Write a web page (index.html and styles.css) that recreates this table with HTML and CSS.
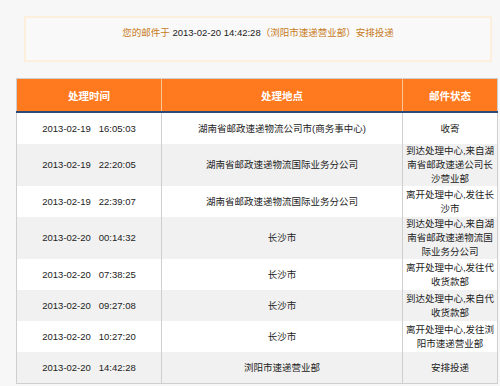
FILE: index.html
```html
<!DOCTYPE html>
<html lang="zh-CN">
<head>
<meta charset="utf-8">
<link rel="stylesheet" href="styles.css">
</head>
<body>
<div class="page">
  <div class="notice">
    <span class="hl">您的邮件于</span> <span class="dt">2013-02-20 14:42:28</span><span class="hl">（浏阳市速递营业部）安排投递</span>
  </div>
  <table class="track">
    <colgroup>
      <col class="c-time"><col class="c-place"><col class="c-state">
    </colgroup>
    <thead>
      <tr><th>处理时间</th><th>处理地点</th><th>邮件状态</th></tr>
    </thead>
    <tbody>
      <tr><td class="t">2013-02-19&nbsp;&nbsp; 16:05:03</td><td>湖南省邮政速递物流公司市(商务事中心)</td><td>收寄</td></tr>
      <tr><td class="t">2013-02-19&nbsp;&nbsp; 22:20:05</td><td>湖南省邮政速递物流国际业务分公司</td><td>到达处理中心,来自湖<br>南省邮政速递公司长<br>沙营业部</td></tr>
      <tr><td class="t">2013-02-19&nbsp;&nbsp; 22:39:07</td><td>湖南省邮政速递物流国际业务分公司</td><td>离开处理中心,发往长<br>沙市</td></tr>
      <tr><td class="t">2013-02-20&nbsp;&nbsp; 00:14:32</td><td>长沙市</td><td>到达处理中心,来自湖<br>南省邮政速递物流国<br>际业务分公司</td></tr>
      <tr><td class="t">2013-02-20&nbsp;&nbsp; 07:38:25</td><td>长沙市</td><td>离开处理中心,发往代<br>收货款部</td></tr>
      <tr><td class="t">2013-02-20&nbsp;&nbsp; 09:27:08</td><td>长沙市</td><td>到达处理中心,来自代<br>收货款部</td></tr>
      <tr><td class="t">2013-02-20&nbsp;&nbsp; 10:27:20</td><td>长沙市</td><td>离开处理中心,发往浏<br>阳市速递营业部</td></tr>
      <tr><td class="t">2013-02-20&nbsp;&nbsp; 14:42:28</td><td>浏阳市速递营业部</td><td>安排投递</td></tr>
    </tbody>
  </table>
</div>
</body>
</html>
```
FILE: styles.css
```css
html, body {
  margin: 0;
  padding: 0;
  background: #f7f7f7;
}
.page {
  padding: 16px 3px 0 16px;
  font-family: "Liberation Sans", "Noto Sans CJK SC", sans-serif;
  color: #222;
}
.notice {
  margin: 0 5px 0 8px;
  height: 42px;
  border: 2px solid #fcefdc;
  background: #f9f9f9;
  text-align: center;
  font-size: 9.5px;
  line-height: 12px;
  padding-top: 9px;
  box-sizing: border-box;
  height: 46px;
}
.notice .hl {
  color: #c77a22;
}
.notice .dt {
  color: #222;
  font-size: 9.5px;
}
.track {
  margin-top: 16px;
  width: 481px;
  border-collapse: collapse;
  table-layout: fixed;
  border: 1px solid #cfcfcf;
  font-size: 9.5px;
}
.c-time { width: 145px; }
.c-place { width: 241px; }
.c-state { width: 95px; }
.track th {
  background: #ff7a1f;
  color: #fff;
  font-weight: bold;
  font-size: 10.5px;
  height: 32px;
  padding: 0;
  border-bottom: 2px solid #2b4a78;
  border-left: 1px solid #f9c79a;
}
.track th:first-child { border-left: none; }
.track td {
  height: 31px;
  padding: 0 2px;
  line-height: 14px;
  text-align: center;
  border-left: 1px solid #cfcfcf;
  vertical-align: middle;
}
.track td.t { font-size: 9.5px; }
.track tbody tr:nth-child(odd) td { background: #ffffff; }
.track tbody tr:nth-child(even) td { background: #f1f1f1; }
```
